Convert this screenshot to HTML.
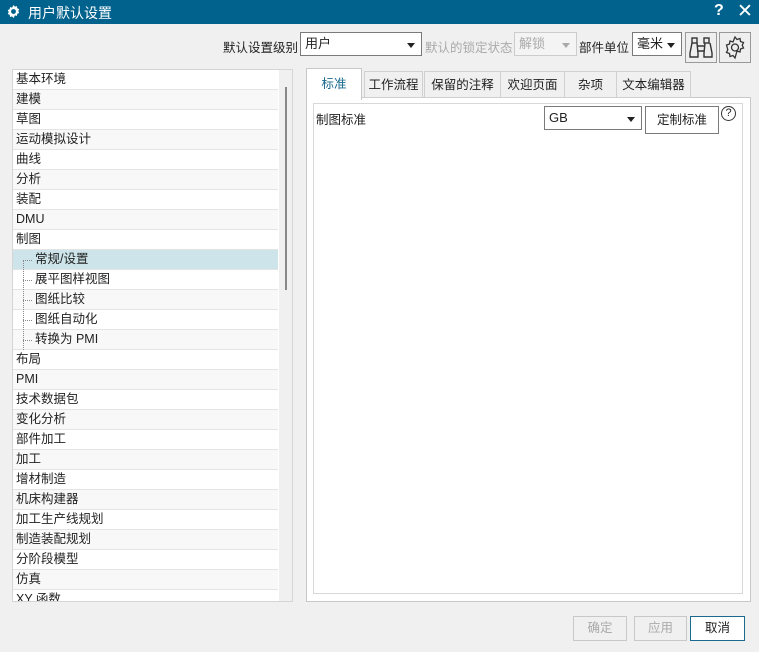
<!DOCTYPE html><html><head><meta charset="utf-8"><style>
*{box-sizing:border-box;margin:0;padding:0}
body{width:759px;height:652px;background:#f0f0f0;font-family:"Liberation Sans","Noto Sans CJK SC",sans-serif;font-size:12px;color:#222;position:relative;overflow:hidden}
.a{position:absolute}
.title{left:0;top:0;width:759px;height:24px;background:#00628d;color:#fff;font-size:14px}
.sel{border:1px solid #7a7a7a;background:#fff;height:24px;line-height:22px;padding-left:4px;font-size:13px}
.arr{position:absolute;right:6px;top:10px;width:0;height:0;border-left:4px solid transparent;border-right:4px solid transparent;border-top:5px solid #222}
.list{left:12px;top:69px;width:281px;height:533px;background:#fff;border:1px solid #d5d5d5;overflow:hidden}
.row{height:20px;line-height:19px;font-size:12.5px;padding-left:3px;border-bottom:1px solid #e4e4e4;width:265px}
.row:nth-child(even){background:#f8f8f8}
.sub{padding-left:22px;position:relative}
.tab{top:71px;height:27px;border:1px solid #d0d0d0;background:#f0f0f0;text-align:center;line-height:26px;font-size:12.5px}
.btn{border:1px solid #c8c8c8;height:25px;line-height:23px;text-align:center;color:#aaa;font-size:12.5px;top:616px}
</style></head><body>
<div class="a title"><svg class="a" style="left:6px;top:4px" width="15" height="15" viewBox="0 0 16 16"><path d="M8 1l1.5 1.8 2.2-.6.3 2.3 2.1.9-1 2.1 1 2-2.1 1-.3 2.2-2.2-.6L8 15l-1.5-1.8-2.2.6-.3-2.3-2.1-.9 1-2.1-1-2 2.1-1 .3-2.2 2.2.6z" fill="#fff"/><circle cx="8" cy="8" r="2.6" fill="#00628d"/></svg><span class="a" style="left:28px;top:3px">用户默认设置</span>
<span class="a" style="left:714px;top:2px;font-weight:bold;font-size:16px">?</span><span class="a" style="left:737px;top:0px;font-size:19px">✕</span></div>
<span class="a" style="left:223px;top:37px;font-size:12.5px">默认设置级别</span>
<div class="a sel" style="left:300px;top:32px;width:122px">用户<div class="arr"></div></div>
<span class="a" style="left:425px;top:37px;font-size:12.5px;color:#aaa">默认的锁定状态</span>
<div class="a sel" style="left:514px;top:32px;width:63px;border-color:#ccc;background:#f4f4f4;color:#aaa">解锁<div class="arr" style="border-top-color:#aaa"></div></div>
<span class="a" style="left:579px;top:37px;font-size:12.5px">部件单位</span>
<div class="a sel" style="left:632px;top:32px;width:50px">毫米<div class="arr"></div></div>
<div class="a" style="left:685px;top:32px;width:32px;height:31px;border:1px solid #999;background:#eee"><svg width="30" height="29" viewBox="0 0 30 29"><g fill="none" stroke="#333" stroke-width="1.4"><rect x="6" y="5" width="5" height="5"/><rect x="18" y="5" width="5" height="5"/><path d="M6 10L4 20v4h8v-4l-1-10M19 10l-1 10v4h8v-4l-2-10M11 13h7M11 18h7"/></g></svg></div>
<div class="a" style="left:719px;top:32px;width:32px;height:31px;border:1px solid #999;background:#eee"><svg width="30" height="29" viewBox="0 0 30 29"><path d="M15 4l2 2.5 3-1 .5 3 3 1-1.3 2.8 1.3 2.7-3 1-.5 3-3-1L15 25l-2-2.5-3 1-.5-3-3-1 1.3-2.8L6.5 12l3-1 .5-3 3 1z" fill="none" stroke="#333" stroke-width="1.3"/><circle cx="15" cy="14.5" r="3.5" fill="none" stroke="#333" stroke-width="1.3"/></svg></div>
<div class="a list">
<div class="row">基本环境</div><div class="row">建模</div><div class="row">草图</div><div class="row">运动模拟设计</div><div class="row">曲线</div><div class="row">分析</div><div class="row">装配</div><div class="row">DMU</div><div class="row">制图</div>
<div class="row sub" style="background:#cce4ea">常规/设置</div><div class="row sub">展平图样视图</div><div class="row sub">图纸比较</div><div class="row sub">图纸自动化</div><div class="row sub">转换为 PMI</div>
<div class="row">布局</div><div class="row">PMI</div><div class="row">技术数据包</div><div class="row">变化分析</div><div class="row">部件加工</div><div class="row">加工</div><div class="row">增材制造</div><div class="row">机床构建器</div><div class="row">加工生产线规划</div><div class="row">制造装配规划</div><div class="row">分阶段模型</div><div class="row">仿真</div><div class="row">XY 函数</div>
<div class="a" style="left:10px;top:190px;width:0;height:90px;border-left:1px dotted #888"></div>
<div class="a" style="left:10px;top:190px;width:9px;border-top:1px dotted #888"></div><div class="a" style="left:10px;top:210px;width:9px;border-top:1px dotted #888"></div><div class="a" style="left:10px;top:230px;width:9px;border-top:1px dotted #888"></div><div class="a" style="left:10px;top:250px;width:9px;border-top:1px dotted #888"></div><div class="a" style="left:10px;top:270px;width:9px;border-top:1px dotted #888"></div>
<div class="a" style="left:266px;top:0;width:14px;height:531px;background:#f0f0f0"></div>
<div class="a" style="left:272px;top:17px;width:2px;height:203px;background:#888"></div>
</div>
<div class="a" style="left:306px;top:97px;width:445px;height:505px;border:1px solid #c8c8c8;background:#fff"></div>
<div class="a tab" style="left:364px;width:59px">工作流程</div>
<div class="a tab" style="left:424px;width:77px">保留的注释</div>
<div class="a tab" style="left:500px;width:65px">欢迎页面</div>
<div class="a tab" style="left:564px;width:53px">杂项</div>
<div class="a tab" style="left:616px;width:75px">文本编辑器</div>
<div class="a" style="left:306px;top:68px;width:56px;height:32px;border:1px solid #c8c8c8;border-bottom:none;background:#fff;text-align:center;line-height:30px;color:#1a6a8f;font-size:12.5px">标准</div>
<div class="a" style="left:313px;top:103px;width:430px;height:491px;border:1px solid #d8d8d8;background:#fff"></div>
<span class="a" style="left:316px;top:109px;font-size:12.5px">制图标准</span>
<div class="a sel" style="left:544px;top:106px;width:98px">GB<div class="arr"></div></div>
<div class="a" style="left:645px;top:106px;width:74px;height:28px;border:1px solid #7a7a7a;background:#fff;text-align:center;line-height:27px;font-size:12.5px">定制标准</div>
<div class="a" style="left:721px;top:106px;width:15px;height:15px;border:1px solid #333;border-radius:50%;text-align:center;font-size:11px;line-height:13px">?</div>
<div class="a btn" style="left:573px;width:54px">确定</div>
<div class="a btn" style="left:634px;width:53px">应用</div>
<div class="a btn" style="left:690px;width:55px;border-color:#1a6a8f;color:#222;background:#fff">取消</div>
</body></html>
